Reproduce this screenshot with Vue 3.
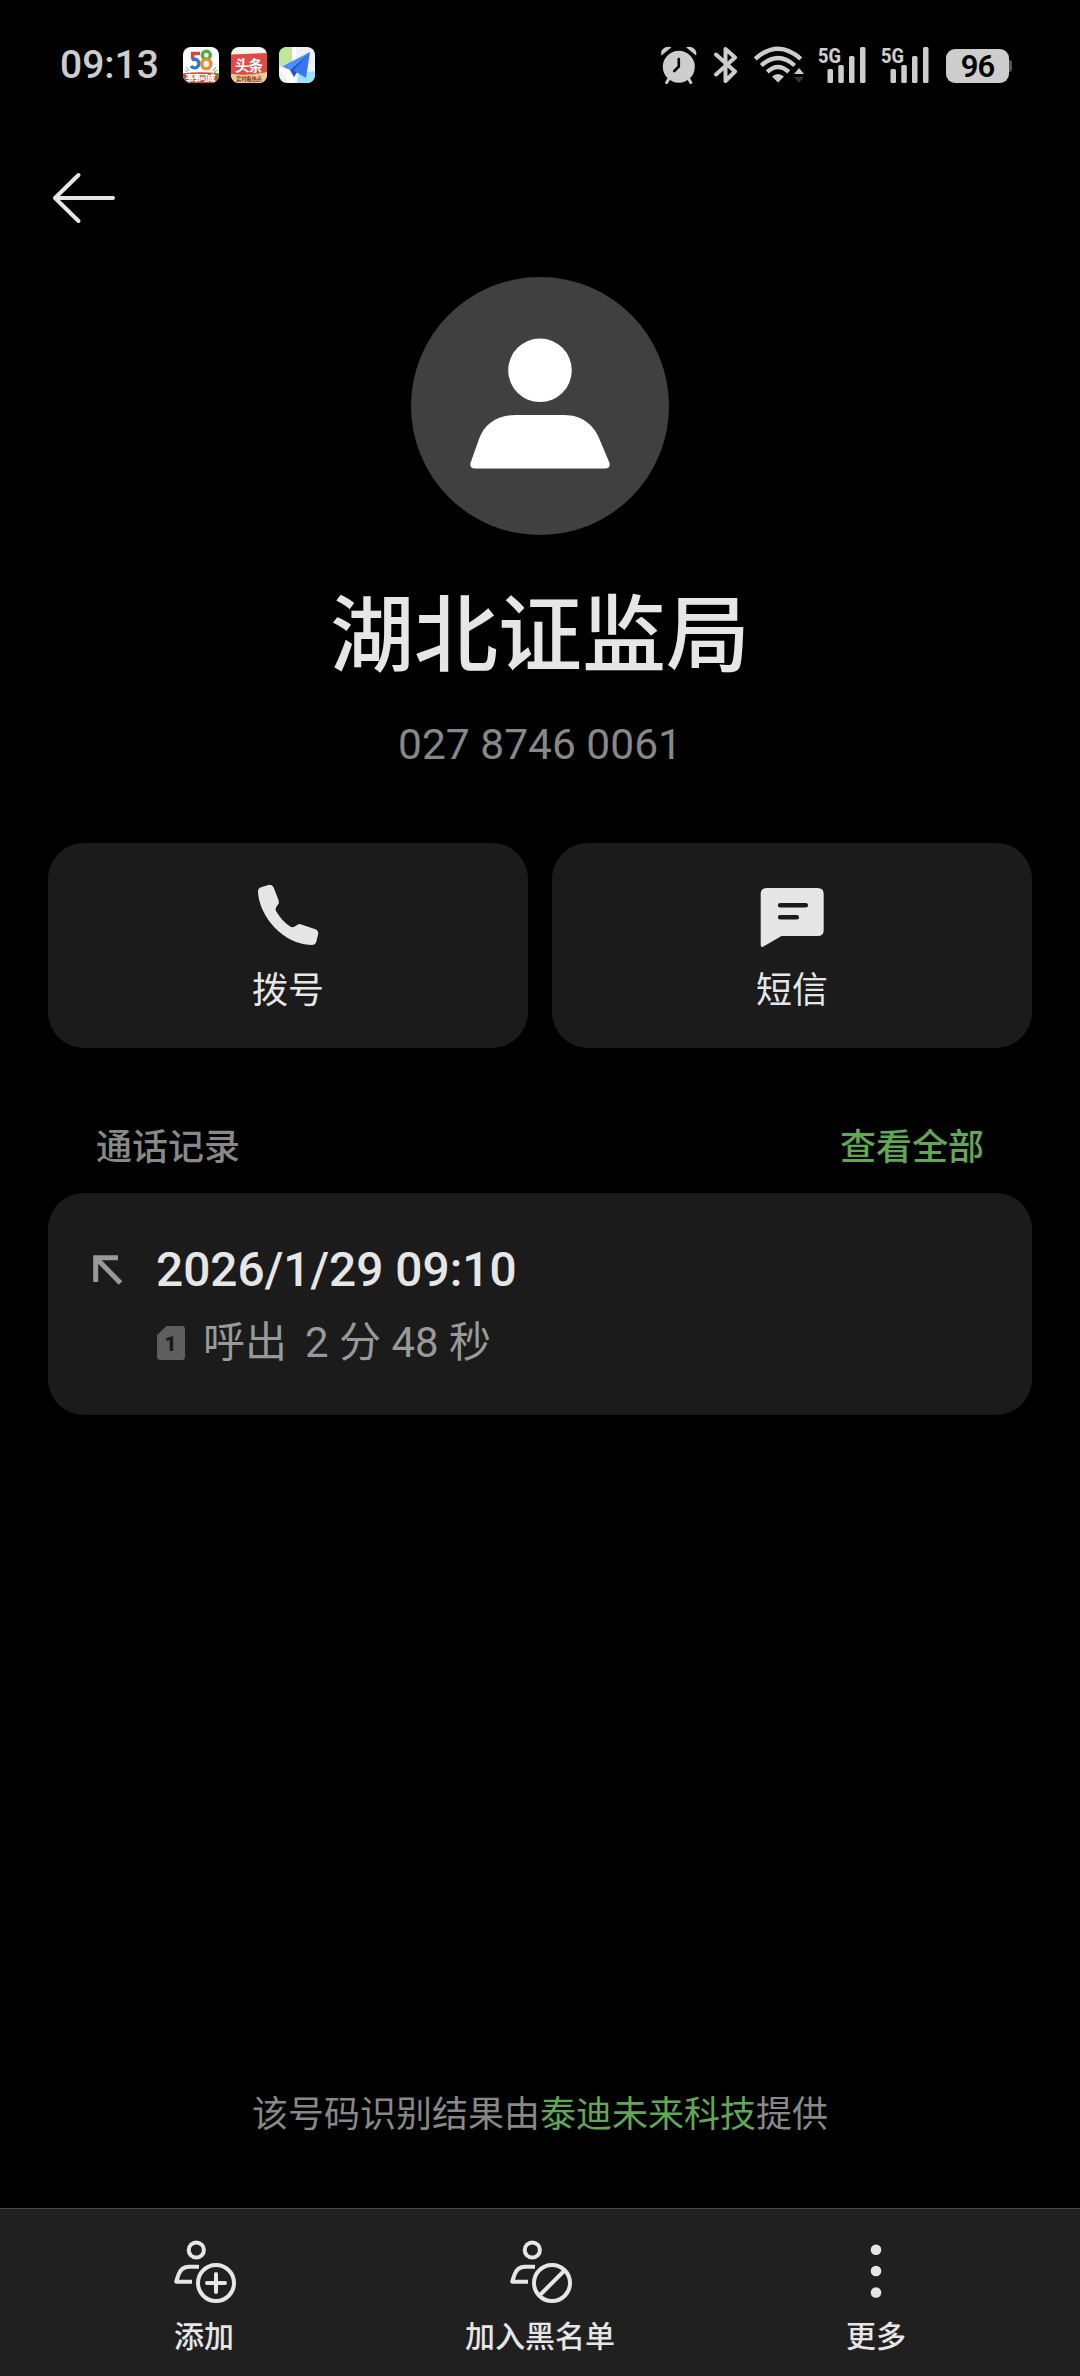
<script setup>
import { ref } from 'vue'

const time = ref('09:13')
const battery = ref(96)
const contact = ref({
  name: '湖北证监局',
  number: '027 8746 0061',
  provider: '泰迪未来科技'
})
const records = ref([
  { id: 1, date: '2026/1/29 09:10', sim: 1, type: '呼出', duration: '2 分 48 秒' }
])
const signals = [1, 2]
</script>

<template>
  <div class="page">
    <div class="status-bar">
      <span class="time">{{ time }}</span>
      <div class="apps">
        <svg class="app" viewBox="0 0 36 36">
          <clipPath id="app-clip"><rect width="36" height="36" rx="8" /></clipPath>
          <g clip-path="url(#app-clip)">
            <rect width="36" height="36" fill="#fff" />
            <g fill="none" stroke-width="3.4">
              <path d="M17 6.5H9.600v6" stroke="#d8433c" />
              <path d="M9 12.300h3a4.300 4.300 0 1 1-4 6.600" stroke="#2f79c8" />
              <circle cx="23.300" cy="8.200" r="4" stroke="#4fae46" />
              <circle cx="23.300" cy="17" r="4.600" stroke="#ee8b31" />
            </g>
            <path d="M3 20l3 4M1.500 23l3 2" stroke="#5aaee0" stroke-width="1" />
            <path d="M33 20l-3 4M34.500 23l-3 2" stroke="#58b14e" stroke-width="1" />
            <path d="M0 26.500Q18 24 36 26.500V36H0z" fill="#d2492f" />
            <path d="M31 25l5 2v5l-5-3z" fill="#74803a" />
            <text x="2.500" y="33.500" textLength="30" font-size="8.500" font-weight="900" fill="#fff">事事可成</text>
          </g>
        </svg>
        <svg class="app" viewBox="0 0 36 36">
          <g clip-path="url(#app-clip)">
            <rect width="36" height="36" fill="#f8f5f2" />
            <path d="M0 7.500L36 6v22H0z" fill="#e04a48" />
            <path d="M0 27q18 2 36-2v11H0z" fill="#f3c99b" />
            <text x="4" y="23.500" textLength="28" font-size="14.500" font-weight="700" fill="#fff">头条</text>
            <text x="5" y="34" textLength="26" font-size="5.400" font-weight="700" fill="#7b3a20">实时看热点</text>
          </g>
        </svg>
        <svg class="app" viewBox="0 0 36 36">
          <g clip-path="url(#app-clip)">
            <rect width="36" height="36" fill="#eef2f6" />
            <path d="M0 0h13v15L0 20z" fill="#bde79b" />
            <path d="M13 0h4v14h-4zM0 22l8-3 9 17h-6z" fill="#fff" />
            <path d="M20 26l16-2v12H18z" fill="#9be2fb" />
            <path d="M31 5L3 19.500l8 3.500z" fill="#4c8df8" />
            <path d="M31 5L11 23l4 7z" fill="#1f55c9" />
            <path d="M31 5L14.500 23.500 27 31z" fill="#3678f2" />
          </g>
        </svg>
      </div>

      <div class="status-icons">
        <svg class="alarm" viewBox="0 0 38 38">
          <path d="M9 32.500l-2.300 4M28.500 32.500l2.300 4" stroke="#cdcdcd" stroke-width="3" stroke-linecap="round" />
          <path d="M1.500 9.500C-.5 3.500 6-1 11.500 1.200zM36 9.500C38 3.500 31.500-1 26 1.200z" fill="#cdcdcd" />
          <circle cx="18.800" cy="20.800" r="16" fill="#cdcdcd" />
          <path d="M18.800 13v7.500L14.300 25" fill="none" stroke="#000" stroke-width="2.600" stroke-linecap="round" />
        </svg>
        <svg class="bluetooth" viewBox="0 0 24 38">
          <path d="M2 8.500l19 17-9.500 9.500V3L21 11.500l-19 17" fill="none" stroke="#cdcdcd" stroke-width="4" stroke-linejoin="round" stroke-linecap="round" />
        </svg>
        <svg class="wifi" viewBox="0 0 52 38">
          <g fill="none" stroke="#cdcdcd" stroke-width="4.300">
            <path d="M2.200 12.800Q25 -7.500 47.800 12.800" />
            <path d="M8.300 19.500Q25 4.500 41.700 19.500" />
            <path d="M14.200 25.800Q25 16 35.800 25.800" />
          </g>
          <path d="M25 36.500l-6-6q6-5 12 0z" fill="#cdcdcd" />
          <path d="M46 22l5 6H41z" fill="#cdcdcd" />
          <path d="M46 37l5-6H41z" fill="#333" />
        </svg>
        <svg v-for="s in signals" :key="s" class="signal" viewBox="0 -6 49 50">
          <text x="0" y="16.500" textLength="23" lengthAdjust="spacingAndGlyphs" font-size="21" font-weight="800" fill="#cdcdcd">5G</text>
          <g fill="#cdcdcd">
            <rect x="9.500" y="23" width="5.500" height="14" rx="1.500" />
            <rect x="20.300" y="19" width="5.500" height="18" rx="1.500" />
            <rect x="31" y="10" width="5.500" height="27" rx="1.500" />
            <rect x="42" y="1" width="5.500" height="36" rx="1.500" />
          </g>
        </svg>
        <div class="battery">{{ battery }}</div>
      </div>
    </div>

    <div class="nav">
      <svg class="back" viewBox="0 0 72 72">
        <path d="M65 36H7M30.500 13L7 36l23.500 23" fill="none" stroke="#e6e6e6" stroke-width="4" stroke-linecap="round" stroke-linejoin="round" />
      </svg>
    </div>

    <div class="profile">
      <svg class="avatar" viewBox="0 0 258 258">
        <circle cx="129" cy="129" r="129" fill="#404040" />
        <circle cx="129" cy="93.300" r="31.800" fill="#fff" />
        <path d="M105 138h48c19 0 31 11 36.500 26.500L198.500 186q1 5.500-4.500 5.500H64q-5.500 0-4.500-5.500L68 162C73.500 147 86 138 105 138z" fill="#fff" />
      </svg>
      <div class="name">{{ contact.name }}</div>
      <div class="number">{{ contact.number }}</div>
    </div>

    <div class="actions">
      <div class="action">
        <svg class="action-icon" viewBox="0 0 72 72">
          <path d="M9 8.200L16.500 6q3.800-.8 5.300 2.800l4.800 12.400q1 2.300-.8 4.600l-1.800 2.700q-1 1.700 0 3.600c3.500 6.200 8.600 11.800 14.200 15.500q2 1.200 4 .2l3-1.800q1.800-1.400 4-.6l13.600 4.700q4 1.500 3.400 4.900l-1.800 7.500q-1 3.500-5 3.500C31.500 65.500 7.500 38 6 13.300q-.3-4 3-5.100z" fill="#e6e6e6" />
        </svg>
        <span>拨号</span>
      </div>
      <div class="action">
        <svg class="action-icon" viewBox="0 0 72 72">
          <path d="M10.700 9h51q6 0 6 6v36q0 6-6 6H25.500L7 67.700q-2.300 1-2.300-1.700V15q0-6 6-6z" fill="#e6e6e6" />
          <path d="M24.200 26.300h25.600M24.200 38.300h16.600" stroke="#1b1b1b" stroke-width="4.600" stroke-linecap="round" />
        </svg>
        <span>短信</span>
      </div>
    </div>

    <div class="section-head">
      <span>通话记录</span>
      <span class="view-all">查看全部</span>
    </div>

    <div v-for="item in records" :key="item.id" class="record">
      <svg class="direction" viewBox="0 0 30 30">
        <path d="M2.700 27V2.700H25M3.500 3.500l24 24.500" fill="none" stroke="#999" stroke-width="5" />
      </svg>
      <div class="record-info">
        <div class="date">{{ item.date }}</div>
        <div class="detail">
          <svg class="sim" viewBox="0 0 28 34">
            <path d="M9.500 0H25q3 0 3 3v28q0 3-3 3H3q-3 0-3-3V9z" fill="#5e5e5e" />
            <text x="13.500" y="24.700" text-anchor="middle" font-size="21" font-weight="900" fill="#1b1b1b">{{ item.sim }}</text>
          </svg>
          <span>{{ item.type }}</span>
          <span class="duration">{{ item.duration }}</span>
        </div>
      </div>
    </div>

    <div class="source">该号码识别结果由<span class="provider">{{ contact.provider }}</span>提供</div>

    <div class="bottom-bar">
      <div class="tab">
        <svg class="tab-icon" viewBox="0 0 72 72">
          <g fill="none" stroke="#e6e6e6" stroke-width="4">
            <circle cx="28.300" cy="15" r="7.600" />
            <path d="M31 31.700H21c-6 0-9 3.500-10.500 8L8.200 46.700H24" stroke-linejoin="round" />
            <circle cx="48" cy="48" r="18" />
            <path d="M48 39v18M39 48h18" stroke-linecap="round" />
          </g>
        </svg>
        <span>添加</span>
      </div>
      <div class="tab">
        <svg class="tab-icon" viewBox="0 0 72 72">
          <g fill="none" stroke="#e6e6e6" stroke-width="4">
            <circle cx="28.300" cy="15" r="7.600" />
            <path d="M31 31.700H21c-6 0-9 3.500-10.500 8L8.200 46.700H24" stroke-linejoin="round" />
            <circle cx="48" cy="48" r="18" />
            <path d="M60.500 35.500l-25 25" />
          </g>
        </svg>
        <span>加入黑名单</span>
      </div>
      <div class="tab">
        <svg class="tab-icon" viewBox="0 0 72 72">
          <g fill="#e6e6e6">
            <circle cx="36" cy="14.700" r="5.300" />
            <circle cx="36" cy="36" r="5.300" />
            <circle cx="36" cy="57.500" r="5.300" />
          </g>
        </svg>
        <span>更多</span>
      </div>
    </div>
  </div>
</template>

<style>
body {
  margin: 0;
  background: #000;
}
</style>

<style scoped>
.page {
  display: flex;
  flex-direction: column;
  width: 1080px;
  height: 2376px;
  background: #000;
  color: #e6e6e6;
  font-family: Roboto, "Noto Sans CJK SC", sans-serif;
}

svg {
  display: block;
  flex: none;
}

.status-bar {
  display: flex;
  align-items: center;
  height: 130px;
  padding: 0 71px 0 60px;
}

.time {
  width: 123px;
  font-size: 39px;
  font-weight: 500;
  color: #cdcdcd;
}

.apps {
  display: flex;
  gap: 12px;
}

.app {
  width: 36px;
  height: 36px;
}

.status-icons {
  display: flex;
  align-items: center;
  margin-left: auto;
}

.alarm {
  width: 38px;
  height: 38px;
  margin-right: 16px;
}

.bluetooth {
  width: 24px;
  height: 38px;
  margin-right: 15px;
}

.wifi {
  width: 52px;
  height: 38px;
  margin-right: 13px;
}

.signal {
  width: 49px;
  height: 50px;
  margin-right: 14px;
}

.battery {
  position: relative;
  width: 63px;
  height: 34px;
  margin: 2px 0 0 2px;
  border-radius: 9px;
  background: #cdcdcd;
  color: #000;
  font-size: 31px;
  font-weight: 600;
  letter-spacing: -1px;
  line-height: 35px;
  text-align: center;
}

.battery::after {
  content: "";
  position: absolute;
  top: 11px;
  right: -3px;
  width: 3px;
  height: 12px;
  border-radius: 0 3px 3px 0;
  background: #555;
}

.nav {
  display: flex;
  align-items: center;
  height: 136px;
  padding-left: 48px;
}

.back {
  width: 72px;
  height: 72px;
}

.profile {
  display: flex;
  flex-direction: column;
  align-items: center;
  padding-top: 11px;
}

.avatar {
  width: 258px;
  height: 258px;
}

.name {
  margin-top: 52px;
  font-size: 84px;
  font-weight: 500;
  line-height: 100px;
}

.number {
  margin-top: 33px;
  color: #888;
  font-size: 42.5px;
  line-height: 50px;
}

.actions {
  display: flex;
  gap: 24px;
  padding: 73px 48px 0;
}

.action {
  display: flex;
  flex: 1;
  flex-direction: column;
  align-items: center;
  box-sizing: border-box;
  height: 205px;
  padding-top: 36px;
  border-radius: 36px;
  background: #1b1b1b;
  font-size: 36px;
  line-height: 40px;
}

.action-icon {
  width: 72px;
  height: 72px;
  margin-bottom: 20px;
}

.section-head {
  display: flex;
  justify-content: space-between;
  padding: 80px 96px 25px;
  color: #888;
  font-size: 36px;
  font-weight: 500;
  line-height: 40px;
}

.view-all {
  color: #5fa854;
}

.record {
  display: flex;
  box-sizing: border-box;
  height: 222px;
  margin: 0 48px;
  padding: 49px 45px 0;
  border-radius: 36px;
  background: #1b1b1b;
}

.direction {
  width: 30px;
  height: 30px;
  margin: 13px 33px 0 0;
}

.date {
  font-size: 47.8px;
  font-weight: 500;
  line-height: 56px;
}

.detail {
  display: flex;
  align-items: center;
  margin-top: 20px;
  color: #999;
  font-size: 42px;
  line-height: 50px;
}

.sim {
  width: 28px;
  height: 34px;
  margin: 0 18px 0 1px;
}

.duration {
  margin-left: 18px;
}

.source {
  margin: auto 0 73px;
  color: #888;
  font-size: 36px;
  line-height: 40px;
  text-align: center;
}

.provider {
  color: #5fa854;
}

.bottom-bar {
  display: flex;
  box-sizing: border-box;
  height: 168px;
  padding: 26px 36px 0;
  border-top: 1px solid #484848;
  background: #202020;
}

.tab {
  display: flex;
  flex: 1;
  flex-direction: column;
  align-items: center;
  font-size: 30px;
  font-weight: 500;
  line-height: 36px;
}

.tab-icon {
  width: 72px;
  height: 72px;
  margin-bottom: 12px;
}
</style>
